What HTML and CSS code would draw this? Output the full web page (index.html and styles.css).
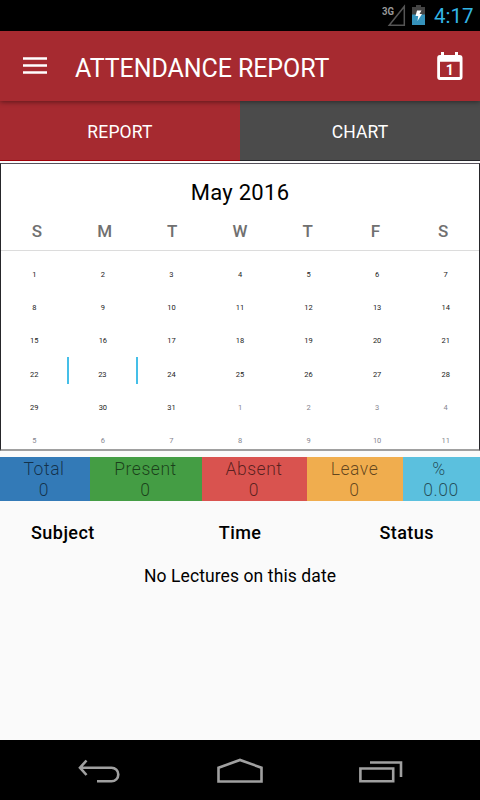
FILE: index.html
```html
<!DOCTYPE html>
<html lang="en">
<head>
    <meta charset="UTF-8">
    <meta name="viewport" content="width=device-width, initial-scale=1.0">
    <title>Attendance Report</title>

    <link rel="stylesheet" href="styles.css">
</head>
<body>

    <div class="status-bar">
        <svg class="signal" width="26" height="24" viewBox="0 0 26 24">
            <text class="signal-text" x="0" y="11.500" textLength="12" lengthAdjust="spacingAndGlyphs">3G</text>
            <path d="M22.300 3.500V22.300H7.200Z" fill="none" stroke="#555" stroke-width="1.500"/>
        </svg>
        <svg class="battery" width="13" height="20" viewBox="0 0 13 20">
            <path d="M0 2H4V0H9V2H13V20H0Z" fill="#444"/>
            <path d="M0 9.500H13V20H0Z" fill="#3592bb"/>
            <path d="M5 5.500H9.500L7.500 9H10L5.500 16L6.200 11H3.500Z" fill="#fff"/>
        </svg>
        <span class="clock">4:17</span>
    </div>

    <header class="toolbar">
        <svg class="menu-icon" width="24" height="18" viewBox="0 0 24 18">
            <path d="M0 1.500H24M0 8.500H24M0 15.500H24" stroke="#fff" stroke-width="2.600"/>
        </svg>
        <h1>ATTENDANCE REPORT</h1>
        <svg class="date-icon" width="26" height="29" viewBox="0 0 26 29">
            <path fill="#fff" fill-rule="evenodd" d="M4 0H7V3H18V0H21V3H22.500Q25.500 3 25.500 6V25Q25.500 28 22.500 28H3Q0.200 28 0.200 25V6Q0.200 3 3 3H4ZM3 9.700V25H22.700V9.700Z"/>
            <text class="date-text" x="12.700" y="22.500">1</text>
        </svg>
    </header>

    <nav class="tabs">
        <a class="tab active">REPORT</a>
        <a class="tab">CHART</a>
    </nav>

    <section class="calendar">
        <h2>May 2016</h2>
        <div class="weekdays">
            <span>S</span><span>M</span><span>T</span><span>W</span><span>T</span><span>F</span><span>S</span>
        </div>
        <div class="days">
            <span>1</span><span>2</span><span>3</span><span>4</span><span>5</span><span>6</span><span>7</span>
            <span>8</span><span>9</span><span>10</span><span>11</span><span>12</span><span>13</span><span>14</span>
            <span>15</span><span>16</span><span>17</span><span>18</span><span>19</span><span>20</span><span>21</span>
            <span>22</span><span class="today">23</span><span>24</span><span>25</span><span>26</span><span>27</span><span>28</span>
            <span>29</span><span>30</span><span>31</span><span class="other">1</span><span class="other">2</span><span class="other">3</span><span class="other">4</span>
            <span class="other">5</span><span class="other">6</span><span class="other">7</span><span class="other">8</span><span class="other">9</span><span class="other">10</span><span class="other">11</span>
        </div>
    </section>

    <section class="summary">
        <div class="total">Total<br>0</div>
        <div class="present">Present<br>0</div>
        <div class="absent">Absent<br>0</div>
        <div class="leave">Leave<br>0</div>
        <div class="percent"><span class="sign">%</span>0.00</div>
    </section>

    <main class="lectures">
        <div class="lectures-head">
            <span class="subject">Subject</span>
            <span class="time">Time</span>
            <span class="status">Status</span>
        </div>
        <p>No Lectures on this date</p>
    </main>

    <footer class="nav-bar">
        <svg width="42" height="26" viewBox="0 0 42 26">
            <path d="M2 9.700H33.500A6.200 6.200 0 0 1 33.500 23.300H19M8.500 2.500L2 9.700L8.500 17" fill="none" stroke="#a0a0a0" stroke-width="2.600"/>
        </svg>
        <svg width="46" height="26" viewBox="0 0 46 26">
            <path d="M1.500 9.700L23 2L44.500 9.700V23.500H1.500Z" fill="none" stroke="#a0a0a0" stroke-width="2.600"/>
        </svg>
        <svg width="44" height="26" viewBox="0 0 44 26">
            <path d="M1.400 10.500H34.200V23.300H1.400ZM11 4.500H42V19" fill="none" stroke="#a0a0a0" stroke-width="2.600"/>
        </svg>
    </footer>

</body>
</html>
```

FILE: styles.css
```css
* {
    box-sizing: border-box;
}
body {
    font-family: Roboto, "Liberation Sans", sans-serif;
    display: flex;
    flex-direction: column;
    height: 800px;
    margin: 0;
    background: #fafafa;
    color: #000;
    overflow: hidden;
}
svg {
    display: block;
    flex: none;
}

/* System status bar */
.status-bar {
    display: flex;
    justify-content: flex-end;
    height: 31px;
    padding: 3px 7px 0 0;
    background: #000;
}
.signal-text {
    font-size: 11px;
    font-weight: bold;
    fill: #999;
}
.battery {
    margin: 2px 9px 0 4px;
}
.clock {
    width: 39px;
    font-size: 20.500px;
    line-height: 27px;
    color: #33b5e5;
}

/* Toolbar */
.toolbar {
    display: flex;
    align-items: center;
    height: 70px;
    padding: 0 17px 0 23px;
    background: #a62a30;
    color: #fff;
    box-shadow: 0 1px 5px rgba(0, 0, 0, 0.45);
    z-index: 1;
}
.toolbar h1 {
    flex: 1;
    margin: 4px 0 0 28px;
    font-size: 25px;
    font-weight: 400;
    letter-spacing: -0.080px;
}
.date-text {
    font-size: 14px;
    font-weight: bold;
    fill: #fff;
    text-anchor: middle;
}
.tabs {
    display: flex;
    height: 60px;
}
.tab {
    flex: 1;
    padding-top: 2px;
    background: #4b4b4b;
    border-bottom: 1px solid #25252a;
    color: #fff;
    font-size: 17.500px;
    line-height: 58px;
    letter-spacing: 0.150px;
    text-align: center;
}
.tab.active {
    background: #a62a30;
    border-color: #a00008;
}

/* Calendar */
.calendar {
    height: 288px;
    margin-top: 2px;
    background: #fff;
    border: 1px solid #26262a;
    border-top-color: #55505a;
    border-bottom: 2px solid #a0a0a0;
}
.calendar h2 {
    margin: 0;
    padding-top: 13px;
    font-size: 22px;
    font-weight: 400;
    line-height: 32px;
    letter-spacing: 0.300px;
    text-align: center;
}
.weekdays {
    display: grid;
    grid-template-columns: repeat(7, 1fr);
    height: 42px;
    padding: 0 2px;
    border-bottom: 1px solid #dcdcdc;
    color: #707070;
    font-size: 17px;
    font-weight: 500;
    line-height: 44px;
    text-align: center;
}
.days {
    display: grid;
    grid-template-columns: repeat(7, 1fr);
    grid-auto-rows: 33.200px;
    margin: 6px -1px 0;
    color: #222;
    font-size: 7.500px;
    line-height: 36px;
    text-align: center;
}
.days .today {
    height: 27px;
    margin: 0 -1px 0 -2px;
    border: solid #45bfe8;
    border-width: 0 2px;
}
.days .other {
    color: #85858f;
}

/* Attendance totals */
.summary {
    display: flex;
    height: 44px;
    margin-top: 6px;
    font-size: 17.500px;
    font-weight: 350;
    line-height: 21px;
    letter-spacing: 0.550px;
    text-align: center;
    color: rgba(0, 0, 0, 0.6);
}
.summary div {
    padding: 2px 1px 0 0;
}
.summary .total {
    width: 90px;
    padding-right: 2px;
    background: #337ab7;
}
.present {
    width: 112px;
    background: #449d44;
}
.absent {
    width: 105px;
    background: #d9534f;
}
.leave {
    width: 96px;
    background: #f0ad4e;
}
.percent {
    width: 77px;
    background: #5bc0de;
}
.sign {
    display: block;
    padding-right: 4px;
}

/* Lecture list */
.lectures {
    flex: 1;
}
.lectures-head {
    display: flex;
    justify-content: space-between;
    padding: 21px 46px 0 31px;
    font-size: 18px;
    font-weight: 500;
    line-height: 21px;
    letter-spacing: 0.450px;
}
.time {
    padding-left: 6px;
}
.lectures p {
    margin: 23px 0 0;
    font-size: 17.500px;
    font-weight: 400;
    line-height: 21px;
    letter-spacing: 0.100px;
    text-align: center;
}

/* System navigation */
.nav-bar {
    display: flex;
    justify-content: space-between;
    height: 60px;
    padding: 18px 77px 0 78px;
    background: #000;
}
```
